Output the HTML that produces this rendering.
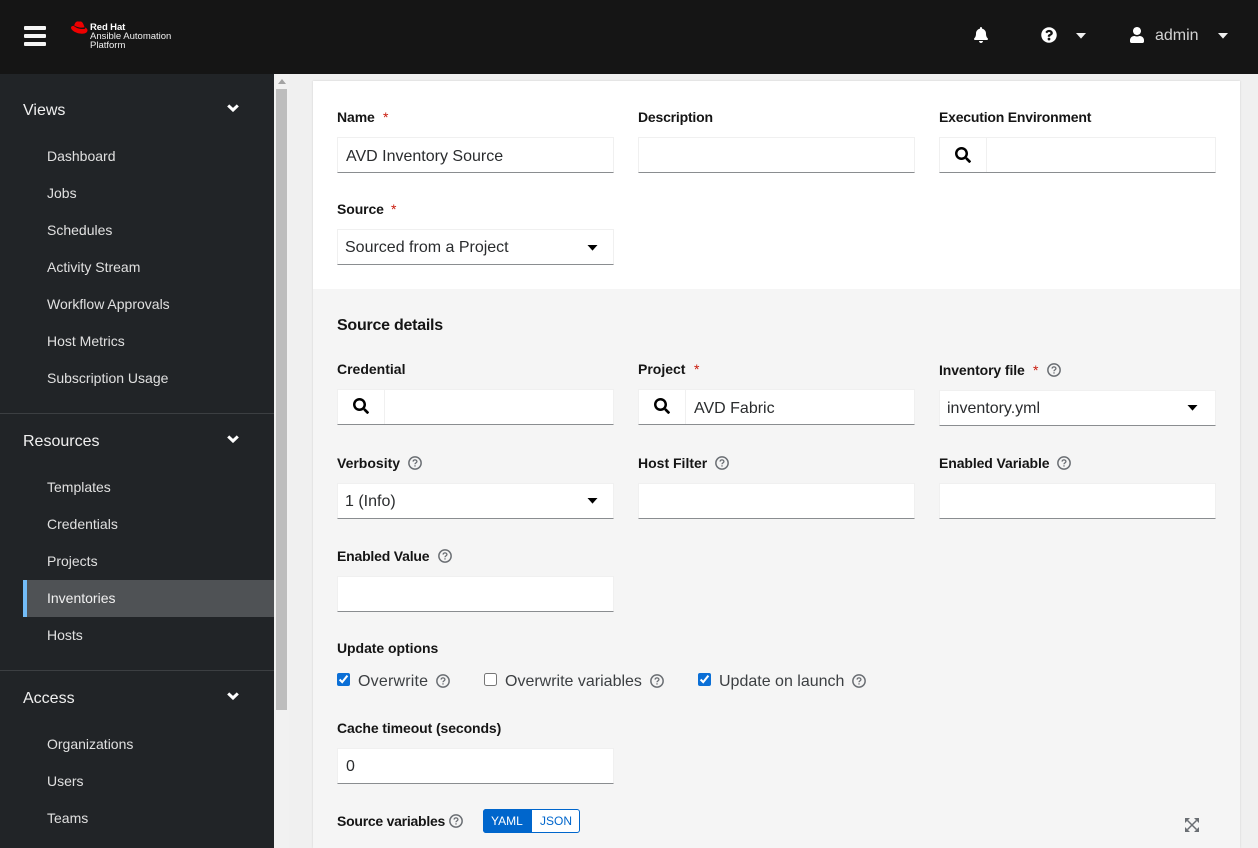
<!DOCTYPE html>
<html><head><meta charset="utf-8"><style>
html,body{margin:0;padding:0;width:1258px;height:848px;overflow:hidden;background:#f0f0f0;font-family:"Liberation Sans",sans-serif;color:#151515}
body{position:relative}
div,span,svg,input{position:absolute}
.t{white-space:nowrap;line-height:20px;height:20px}
.nav{left:47px;font-size:14px;color:#e0e0e0}
.sec{left:23px;font-size:16px;color:#f0f0f0}
.l{font-size:14px;font-weight:bold;color:#151515;letter-spacing:-.1px}
.s{color:#c9190b;font-size:14px}
.i{background:#fff;border:1px solid #f0f0f0;border-bottom:1px solid #8a8d90;box-sizing:border-box;width:277px;height:36px}
.v{font-size:16px;color:#2a2c2e}
.q{width:14px;height:14px;margin:-1px 0 0 -1px}
</style></head><body>
<svg width="0" height="0" style="position:absolute"><defs>
<symbol id="search" viewBox="0 0 512 512"><path d="M505 442.7L405.3 343c-4.5-4.5-10.6-7-17-7H372c27.6-35.3 44-79.7 44-128C416 93.1 322.9 0 208 0S0 93.1 0 208s93.1 208 208 208c48.3 0 92.7-16.4 128-44v16.3c0 6.4 2.5 12.5 7 17l99.7 99.7c9.4 9.4 24.6 9.4 33.9 0l28.3-28.3c9.4-9.4 9.4-24.6.1-34zM208 336c-70.7 0-128-57.2-128-128 0-70.7 57.2-128 128-128 70.7 0 128 57.2 128 128 0 70.7-57.2 128-128 128z"/></symbol>
<symbol id="qm" viewBox="0 0 13 13"><circle cx="6.5" cy="6.5" r="5.7" fill="none" stroke="#6a6e73" stroke-width="1.4"/><path d="M4.7 5.2c.1-1.1.9-1.6 1.8-1.6 1 0 1.8.6 1.8 1.5 0 1.3-1.8 1.3-1.8 2.6" fill="none" stroke="#6a6e73" stroke-width="1.2"/><rect x="5.9" y="8.6" width="1.2" height="1.2" fill="#6a6e73"/></symbol>
<symbol id="chev" viewBox="0 0 12 8"><path d="M1.2 1.400L6 6l4.800-4.600" fill="none" stroke="#fff" stroke-width="3"/></symbol>
<symbol id="car" viewBox="0 0 10 6"><path d="M0 0h10L5 5.6z"/></symbol>
</defs></svg>

<!-- header -->
<div style="left:0;top:0;width:1258px;height:74px;background:#151515"></div>
<div style="left:24px;top:26px;width:22px;height:4px;background:#f5f5f5;border-radius:1px"></div>
<div style="left:24px;top:34px;width:22px;height:4px;background:#f5f5f5;border-radius:1px"></div>
<div style="left:24px;top:41.500px;width:22px;height:4px;background:#f5f5f5;border-radius:1px"></div>
<svg style="left:71px;top:21px" width="17" height="13" viewBox="0 0 17 13"><path d="M3.200 4.500C4 1.500 5.500.1 7.500.5c1 .3 2 -.3 3 .2C12 1.400 12.700 4 13.600 6.300 10 7.300 5.500 6 3.200 4.500z" fill="#e00"/><path d="M2.600 4.800C1 5 0 5.600 0 6.600 0 9 5 12.700 11 12.700c3.500 0 5.500-1.500 5.500-3.500 0-1.200-1-2.200-2.500-2.700l.2 1.200C10 8.800 5 7.200 2.600 4.800z" fill="#e00"/></svg>
<div class="t" style="left:90px;top:18px;font-size:9.500px;font-weight:bold;color:#fff;letter-spacing:-.1px">Red Hat</div>
<div class="t" style="left:90px;top:27px;font-size:9.500px;color:#f0f0f0">Ansible Automation</div>
<div class="t" style="left:90px;top:36px;font-size:9.500px;color:#f0f0f0">Platform</div>

<svg style="left:974px;top:27px" width="14" height="16" viewBox="0 0 448 512" fill="#fff"><path d="M224 512c35.320 0 63.970-28.650 63.970-64H160.030c0 35.350 28.650 64 63.970 64zm215.390-149.710c-19.320-20.760-55.470-51.990-55.470-154.290 0-77.700-54.480-139.900-127.940-155.160V32c0-17.670-14.320-32-31.980-32s-31.980 14.330-31.980 32v20.840C118.560 68.100 64.080 130.300 64.080 208c0 102.300-36.150 133.530-55.470 154.290-6 6.450-8.660 14.160-8.610 21.710.11 16.400 12.980 32 32.100 32h383.800c19.120 0 32-15.600 32.100-32 .05-7.550-2.610-15.270-8.610-21.710z"/></svg>
<svg style="left:1041px;top:27px" width="16" height="16" viewBox="0 0 512 512" fill="#fff"><path d="M504 256c0 136.997-111.043 248-248 248S8 392.997 8 256C8 119.083 119.043 8 256 8s248 111.083 248 248zM262.655 90c-54.497 0-89.255 22.957-116.549 63.758-3.536 5.286-2.353 12.415 2.715 16.258l34.699 26.310c5.205 3.947 12.621 3.008 16.665-2.122 17.864-22.658 30.113-35.797 57.303-35.797 20.429 0 45.698 13.148 45.698 32.958 0 14.976-12.363 22.667-32.534 33.976C247.128 238.528 216 254.941 216 296v4c0 6.627 5.373 12 12 12h56c6.627 0 12-5.373 12-12v-1.333c0-28.462 83.186-29.647 83.186-106.667 0-58.002-60.165-102-116.531-102zM256 338c-25.365 0-46 20.635-46 46 0 25.364 20.635 46 46 46s46-20.636 46-46c0-25.365-20.635-46-46-46z"/></svg>
<svg style="left:1076px;top:33px;fill:#f0f0f0" width="10" height="6"><use href="#car"/></svg>
<svg style="left:1130px;top:27px" width="14" height="16" viewBox="0 0 448 512" fill="#fff"><path d="M224 256c70.700 0 128-57.300 128-128S294.700 0 224 0 96 57.300 96 128s57.300 128 128 128zm89.600 32h-16.700c-22.200 10.200-46.900 16-72.900 16s-50.600-5.800-72.900-16h-16.700C60.200 288 0 348.200 0 422.400V464c0 26.500 21.500 48 48 48h352c26.500 0 48-21.500 48-48v-41.600c0-74.200-60.200-134.400-134.400-134.400z"/></svg>
<div class="t" style="left:1155px;top:26px;font-size:16px;color:#d2d2d2">admin</div>
<svg style="left:1218px;top:33px;fill:#f0f0f0" width="10" height="6"><use href="#car"/></svg>

<!-- sidebar -->
<div style="left:0;top:74px;width:274px;height:774px;background:#212427"></div>
<div class="t sec" style="top:101px">Views</div>
<svg style="left:227px;top:104px" width="12" height="8"><use href="#chev"/></svg>
<div class="t nav" style="top:146px">Dashboard</div>
<div class="t nav" style="top:183px">Jobs</div>
<div class="t nav" style="top:220px">Schedules</div>
<div class="t nav" style="top:257px">Activity Stream</div>
<div class="t nav" style="top:294px">Workflow Approvals</div>
<div class="t nav" style="top:331px">Host Metrics</div>
<div class="t nav" style="top:368px">Subscription Usage</div>
<div style="left:0;top:413px;width:274px;height:1px;background:#3c3f42"></div>
<div class="t sec" style="top:432px">Resources</div>
<svg style="left:227px;top:435px" width="12" height="8"><use href="#chev"/></svg>
<div class="t nav" style="top:477px">Templates</div>
<div class="t nav" style="top:514px">Credentials</div>
<div class="t nav" style="top:551px">Projects</div>
<div style="left:23px;top:580px;width:251px;height:37px;background:#4f5255"></div>
<div style="left:23px;top:580px;width:4px;height:37px;background:#73bcf7"></div>
<div class="t nav" style="top:588px;color:#f0f0f0">Inventories</div>
<div class="t nav" style="top:625px">Hosts</div>
<div style="left:0;top:670px;width:274px;height:1px;background:#3c3f42"></div>
<div class="t sec" style="top:689px">Access</div>
<svg style="left:227px;top:692px" width="12" height="8"><use href="#chev"/></svg>
<div class="t nav" style="top:734px">Organizations</div>
<div class="t nav" style="top:771px">Users</div>
<div class="t nav" style="top:808px">Teams</div>

<!-- scrollbar -->
<div style="left:274px;top:74px;width:15px;height:774px;background:#f1f1f1"></div>
<div style="left:276px;top:89px;width:11px;height:621px;background:#bdbdbd"></div>
<svg style="left:278px;top:79px" width="8" height="6"><path d="M0 5h8L4 0z" fill="#a3a3a3"/></svg>

<!-- card -->
<div style="left:313px;top:81px;width:927px;height:767px;background:#fff;box-shadow:0 0 2px rgba(3,3,3,.14)"></div>
<div style="left:313px;top:289px;width:927px;height:559px;background:#f5f5f5"></div>

<!-- row 1 -->
<div class="t l" style="left:337px;top:107px">Name</div><div class="t s" style="left:383px;top:107px">*</div>
<div class="i" style="left:337px;top:137px"></div><div class="t v" style="left:346px;top:147px">AVD Inventory Source</div>
<div class="t l" style="left:638px;top:107px;letter-spacing:-.2px">Description</div>
<div class="i" style="left:638px;top:137px"></div>
<div class="t l" style="left:939px;top:107px;letter-spacing:-.2px">Execution Environment</div>
<div class="i" style="left:939px;top:137px"></div><div style="left:986px;top:138px;width:1px;height:34px;background:#f0f0f0"></div>
<svg style="left:955px;top:147px" width="16" height="16"><use href="#search"/></svg>

<div class="t l" style="left:337px;top:199px">Source</div><div class="t s" style="left:391px;top:199px">*</div>
<div class="i" style="left:337px;top:229px"></div><div class="t v" style="left:345px;top:238px">Sourced from a Project</div>
<svg style="left:587px;top:245px" width="11" height="6"><use href="#car"/></svg>

<div class="t" style="left:337px;top:316px;font-size:16px;font-weight:bold;letter-spacing:-.25px">Source details</div>

<!-- row 2 -->
<div class="t l" style="left:337px;top:359px;letter-spacing:0">Credential</div>
<div class="i" style="left:337px;top:389px"></div><div style="left:384px;top:390px;width:1px;height:34px;background:#f0f0f0"></div>
<svg style="left:353px;top:398px" width="16" height="16"><use href="#search"/></svg>
<div class="t l" style="left:638px;top:359px;letter-spacing:0">Project</div><div class="t s" style="left:694px;top:359px">*</div>
<div class="i" style="left:638px;top:389px"></div><div style="left:685px;top:390px;width:1px;height:34px;background:#f0f0f0"></div>
<svg style="left:654px;top:398px" width="16" height="16"><use href="#search"/></svg>
<div class="t v" style="left:694px;top:399px">AVD Fabric</div>
<div class="t l" style="left:939px;top:360px">Inventory file</div><div class="t s" style="left:1033px;top:360px">*</div>
<svg class="q" style="left:1048px;top:364px"><use href="#qm"/></svg>
<div class="i" style="left:939px;top:390px"></div><div class="t v" style="left:947px;top:399px">inventory.yml</div>
<svg style="left:1187px;top:405px" width="11" height="6"><use href="#car"/></svg>

<!-- row 3 -->
<div class="t l" style="left:337px;top:453px;letter-spacing:0">Verbosity</div><svg class="q" style="left:409px;top:457px"><use href="#qm"/></svg>
<div class="i" style="left:337px;top:483px"></div><div class="t v" style="left:345px;top:492px">1 (Info)</div>
<svg style="left:587px;top:498px" width="11" height="6"><use href="#car"/></svg>
<div class="t l" style="left:638px;top:453px;letter-spacing:0">Host Filter</div><svg class="q" style="left:716px;top:457px"><use href="#qm"/></svg>
<div class="i" style="left:638px;top:483px"></div>
<div class="t l" style="left:939px;top:453px">Enabled Variable</div><svg class="q" style="left:1058px;top:457px"><use href="#qm"/></svg>
<div class="i" style="left:939px;top:483px"></div>

<div class="t l" style="left:337px;top:546px;letter-spacing:-.2px">Enabled Value</div><svg class="q" style="left:439px;top:550px"><use href="#qm"/></svg>
<div class="i" style="left:337px;top:576px"></div>

<!-- options -->
<div class="t l" style="left:337px;top:638px;letter-spacing:-.05px">Update options</div>
<input type="checkbox" checked style="left:337px;top:673px;margin:0;accent-color:#0b6fd6">
<div class="t v" style="left:358px;top:672px;color:#3c3f42;letter-spacing:.2px">Overwrite</div><svg class="q" style="left:437px;top:675px"><use href="#qm"/></svg>
<input type="checkbox" style="left:484px;top:673px;margin:0">
<div class="t v" style="left:505px;top:672px;color:#3c3f42">Overwrite variables</div><svg class="q" style="left:651px;top:675px"><use href="#qm"/></svg>
<input type="checkbox" checked style="left:698px;top:673px;margin:0;accent-color:#0b6fd6">
<div class="t v" style="left:719px;top:672px;color:#3c3f42">Update on launch</div><svg class="q" style="left:853px;top:675px"><use href="#qm"/></svg>

<div class="t l" style="left:337px;top:718px">Cache timeout (seconds)</div>
<div class="i" style="left:337px;top:748px"></div><div class="t v" style="left:346px;top:757px">0</div>

<div class="t l" style="left:337px;top:811px;letter-spacing:-.25px">Source variables</div><svg class="q" style="left:450px;top:815px"><use href="#qm"/></svg>
<div style="left:483px;top:809px;width:97px;height:24px;box-sizing:border-box;border:1px solid #06c;border-radius:3px;background:#fff"></div>
<div style="left:483px;top:809px;width:49px;height:24px;background:#06c;border-radius:3px 0 0 3px"></div>
<div class="t" style="left:491px;top:811px;font-size:12px;color:#fff">YAML</div>
<div class="t" style="left:540px;top:811px;font-size:12px;color:#06c">JSON</div>

<svg style="left:1185px;top:818px" width="14" height="14" viewBox="0 0 14 14" fill="none"><path d="M0 0h5L0 5zM14 0v5L9 0zM0 14V9l5 5zM14 14H9l5-5z" fill="#6a6e73"/><path d="M2.500 2.500l9 9M11.500 2.500l-9 9" stroke="#6a6e73" stroke-width="1.500"/></svg>
</body></html>
